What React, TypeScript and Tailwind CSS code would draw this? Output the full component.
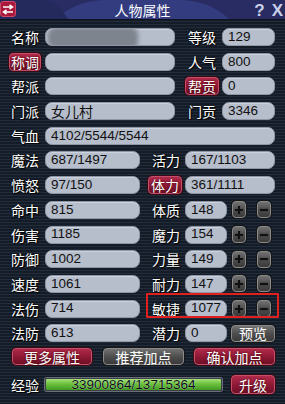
import React from "react";

const CJK = "font-['Noto_Sans_CJK_SC','Noto_Sans',sans-serif]";
const NUM = "font-['Liberation_Sans',Arial,sans-serif]";

function Label({ t, ml = 2 }: { t: string; ml?: number }) {
  return (
    <span
      className={`${CJK} text-[14px] leading-none text-white [text-shadow:0_0_2px_#000,1px_1px_1px_#000] whitespace-nowrap`}
      style={{ marginLeft: ml }}
    >
      {t}
    </span>
  );
}

function Field({ w, v, children }: { w: number; v?: string; children?: React.ReactNode }) {
  return (
    <div
      className={`relative h-[18px] rounded-[7px] bg-[#b6bdcb] border border-[#8e96a6] shadow-[inset_0_1px_1px_rgba(255,255,255,0.35)] flex items-center pl-[5px] overflow-hidden ${NUM} text-[13.5px] text-[#111] shrink-0`}
      style={{ width: w }}
    >
      {children}
      {v}
    </div>
  );
}

function RedBtn({ t, w, ml = 0, h = 18 }: { t: string; w: number; ml?: number; h?: number }) {
  return (
    <div
      className={`shrink-0 flex items-center justify-center rounded-[4px] border border-[#c2506a] bg-[linear-gradient(180deg,#b02a4a_0%,#8c1834_55%,#6e0e25_100%)] shadow-[0_0_0_1px_#3a0a14] ${CJK} text-[14px] leading-none text-white [text-shadow:0_0_2px_#300]`}
      style={{ width: w, marginLeft: ml, height: h }}
    >
      {t}
    </div>
  );
}

function GrayBtn({ children, w, h = 17, ml = 0 }: { children: React.ReactNode; w: number; h?: number; ml?: number }) {
  return (
    <div
      className={`shrink-0 flex items-center justify-center rounded-[4px] border border-[#8a8a8a] bg-[linear-gradient(180deg,#727272_0%,#4e4e4e_50%,#3a3a3a_100%)] shadow-[0_0_0_1px_#161616] ${CJK} text-[14px] leading-none text-white`}
      style={{ width: w, height: h, marginLeft: ml }}
    >
      {children}
    </div>
  );
}

function Plus() {
  return (
    <GrayBtn w={14} h={17} ml={5}>
      <svg width="10" height="10" viewBox="0 0 10 10">
        <path d="M5 1v8M1 5h8" stroke="#111" strokeWidth="2.2" />
      </svg>
    </GrayBtn>
  );
}
function Minus() {
  return (
    <GrayBtn w={14} h={17} ml={11}>
      <svg width="10" height="10" viewBox="0 0 10 10">
        <path d="M1 5h8" stroke="#111" strokeWidth="2.2" />
      </svg>
    </GrayBtn>
  );
}

function Row({ children }: { children: React.ReactNode }) {
  return <div className="relative flex items-center h-[18px]">{children}</div>;
}

function LCell({ children }: { children: React.ReactNode }) {
  return <div className="w-[36px] shrink-0 flex items-center">{children}</div>;
}

function StatRow({ l, lv, r, rv, box }: { l: string; lv: string; r: string; rv: string; box?: boolean }) {
  return (
    <Row>
      <LCell>
        <Label t={l} />
      </LCell>
      <Field w={95} v={lv} />
      <div className="w-[45px] shrink-0 flex items-center">
        <Label t={r} ml={12} />
      </div>
      <Field w={42} v={rv} />
      <Plus />
      <Minus />
      {box && (
        <div className="absolute left-[137px] top-[-7px] w-[133px] h-[25px] border-2 border-[#e0201e] rounded-[1px]" />
      )}
    </Row>
  );
}

export default function App() {
  return (
    <div className="w-[285px] h-[404px] overflow-hidden relative bg-[#18212d] bg-[repeating-linear-gradient(180deg,#222c3a_0px,#222c3a_1px,#141c27_1px,#141c27_3px)]">
      {/* Title bar */}
      <div className="relative h-[20px] bg-[#282c62] border-b border-[#0e1222] overflow-hidden">
        <svg className="absolute left-0 top-0" width="285" height="20" viewBox="0 0 285 20">
          <path d="M55 20 C70 6, 85 0, 110 0 L175 0 C200 0, 215 6, 230 20 Z" fill="#343c80" />
          <path d="M0 0 L40 0 C60 0 62 14 70 20 L0 20 Z" fill="#252a5c" />
        </svg>
        <div className="absolute left-0 top-[1px] w-[16px] h-[16px] rounded-[3px] bg-[#a8183a] border border-[#d04a68] flex items-center justify-center">
          <svg width="12" height="11" viewBox="0 0 12 11">
            <path d="M1 3h9M7.5 0.8L10.5 3 7.5 5.2" stroke="#fff" strokeWidth="1.6" fill="none" />
            <path d="M11 8H2M4.5 5.8L1.5 8 4.5 10.2" stroke="#fff" strokeWidth="1.6" fill="none" />
          </svg>
        </div>
        <div className={`absolute inset-0 flex items-center justify-center ${CJK} text-[14px] leading-none text-white`}>
          人物属性
        </div>
        <div className={`absolute right-[2px] top-[2px] flex items-center gap-[7px] ${NUM} font-bold text-[17px] leading-none text-[#c8cfe8]`}>
          <span>?</span>
          <span>X</span>
        </div>
      </div>

      {/* Body */}
      <div className="pl-[9px] pt-[8px] flex flex-col gap-[6.7px]">
        <Row>
          <LCell>
            <Label t="名称" />
          </LCell>
          <Field w={130}>
            <div className="absolute left-[2px] top-[-2px] w-[90px] h-[22px] bg-[#7e848e] blur-[2px] rounded-[8px]" />
          </Field>
          <div className="w-[47px] shrink-0 flex items-center">
            <Label t="等级" ml={13} />
          </div>
          <Field w={53} v="129" />
        </Row>
        <Row>
          <LCell>
            <RedBtn t="称调" w={32} />
          </LCell>
          <Field w={130} />
          <div className="w-[47px] shrink-0 flex items-center">
            <Label t="人气" ml={13} />
          </div>
          <Field w={53} v="800" />
        </Row>
        <Row>
          <LCell>
            <Label t="帮派" />
          </LCell>
          <Field w={130} />
          <div className="w-[47px] shrink-0 flex items-center">
            <RedBtn t="帮贡" w={34} ml={10} />
          </div>
          <Field w={53} v="0" />
        </Row>
        <Row>
          <LCell>
            <Label t="门派" />
          </LCell>
          <Field w={130}>
            <span className={`${CJK} text-[14px] text-[#111]`}>女儿村</span>
          </Field>
          <div className="w-[47px] shrink-0 flex items-center">
            <Label t="门贡" ml={13} />
          </div>
          <Field w={53} v="3346" />
        </Row>
        <Row>
          <LCell>
            <Label t="气血" />
          </LCell>
          <Field w={230} v="4102/5544/5544" />
        </Row>
        <Row>
          <LCell>
            <Label t="魔法" />
          </LCell>
          <Field w={95} v="687/1497" />
          <div className="w-[45px] shrink-0 flex items-center">
            <Label t="活力" ml={12} />
          </div>
          <Field w={90} v="167/1103" />
        </Row>
        <Row>
          <LCell>
            <Label t="愤怒" />
          </LCell>
          <Field w={95} v="97/150" />
          <div className="w-[45px] shrink-0 flex items-center">
            <RedBtn t="体力" w={34} ml={8} />
          </div>
          <Field w={90} v="361/1111" />
        </Row>
        <StatRow l="命中" lv="815" r="体质" rv="148" />
        <StatRow l="伤害" lv="1185" r="魔力" rv="154" />
        <StatRow l="防御" lv="1002" r="力量" rv="149" />
        <StatRow l="速度" lv="1061" r="耐力" rv="147" />
        <StatRow l="法伤" lv="714" r="敏捷" rv="1077" box />
        <Row>
          <LCell>
            <Label t="法防" />
          </LCell>
          <Field w={95} v="613" />
          <div className="w-[45px] shrink-0 flex items-center">
            <Label t="潜力" ml={12} />
          </div>
          <Field w={42} v="0" />
          <GrayBtn w={44} h={17} ml={4}>
            预览
          </GrayBtn>
        </Row>
      </div>

      {/* Buttons */}
      <div className="flex items-center pl-[12px] mt-[6px] h-[17px]">
        <RedBtn t="更多属性" w={80} h={17} />
        <GrayBtn w={81} h={17} ml={11}>
          推荐加点
        </GrayBtn>
        <RedBtn t="确认加点" w={81} h={17} ml={10} />
      </div>

      {/* Exp */}
      <div className="flex items-center pl-[9px] mt-[10px] h-[19px]">
        <LCell>
          <Label t="经验" />
        </LCell>
        <div className="relative w-[177px] h-[13px] rounded-[2px] border border-[#3c3f44] bg-[linear-gradient(180deg,#a6e07a_0%,#6cc03c_45%,#3f9a22_100%)] shadow-[0_0_0_1px_#6a6e78] flex items-center justify-center">
          <span className={`${NUM} text-[13.5px] leading-none text-[#0a0a0a] [text-shadow:0_0_1px_#dfe]`}>
            33900864/13715364
          </span>
        </div>
        <RedBtn t="升级" w={44} h={19} ml={9} />
      </div>
    </div>
  );
}
